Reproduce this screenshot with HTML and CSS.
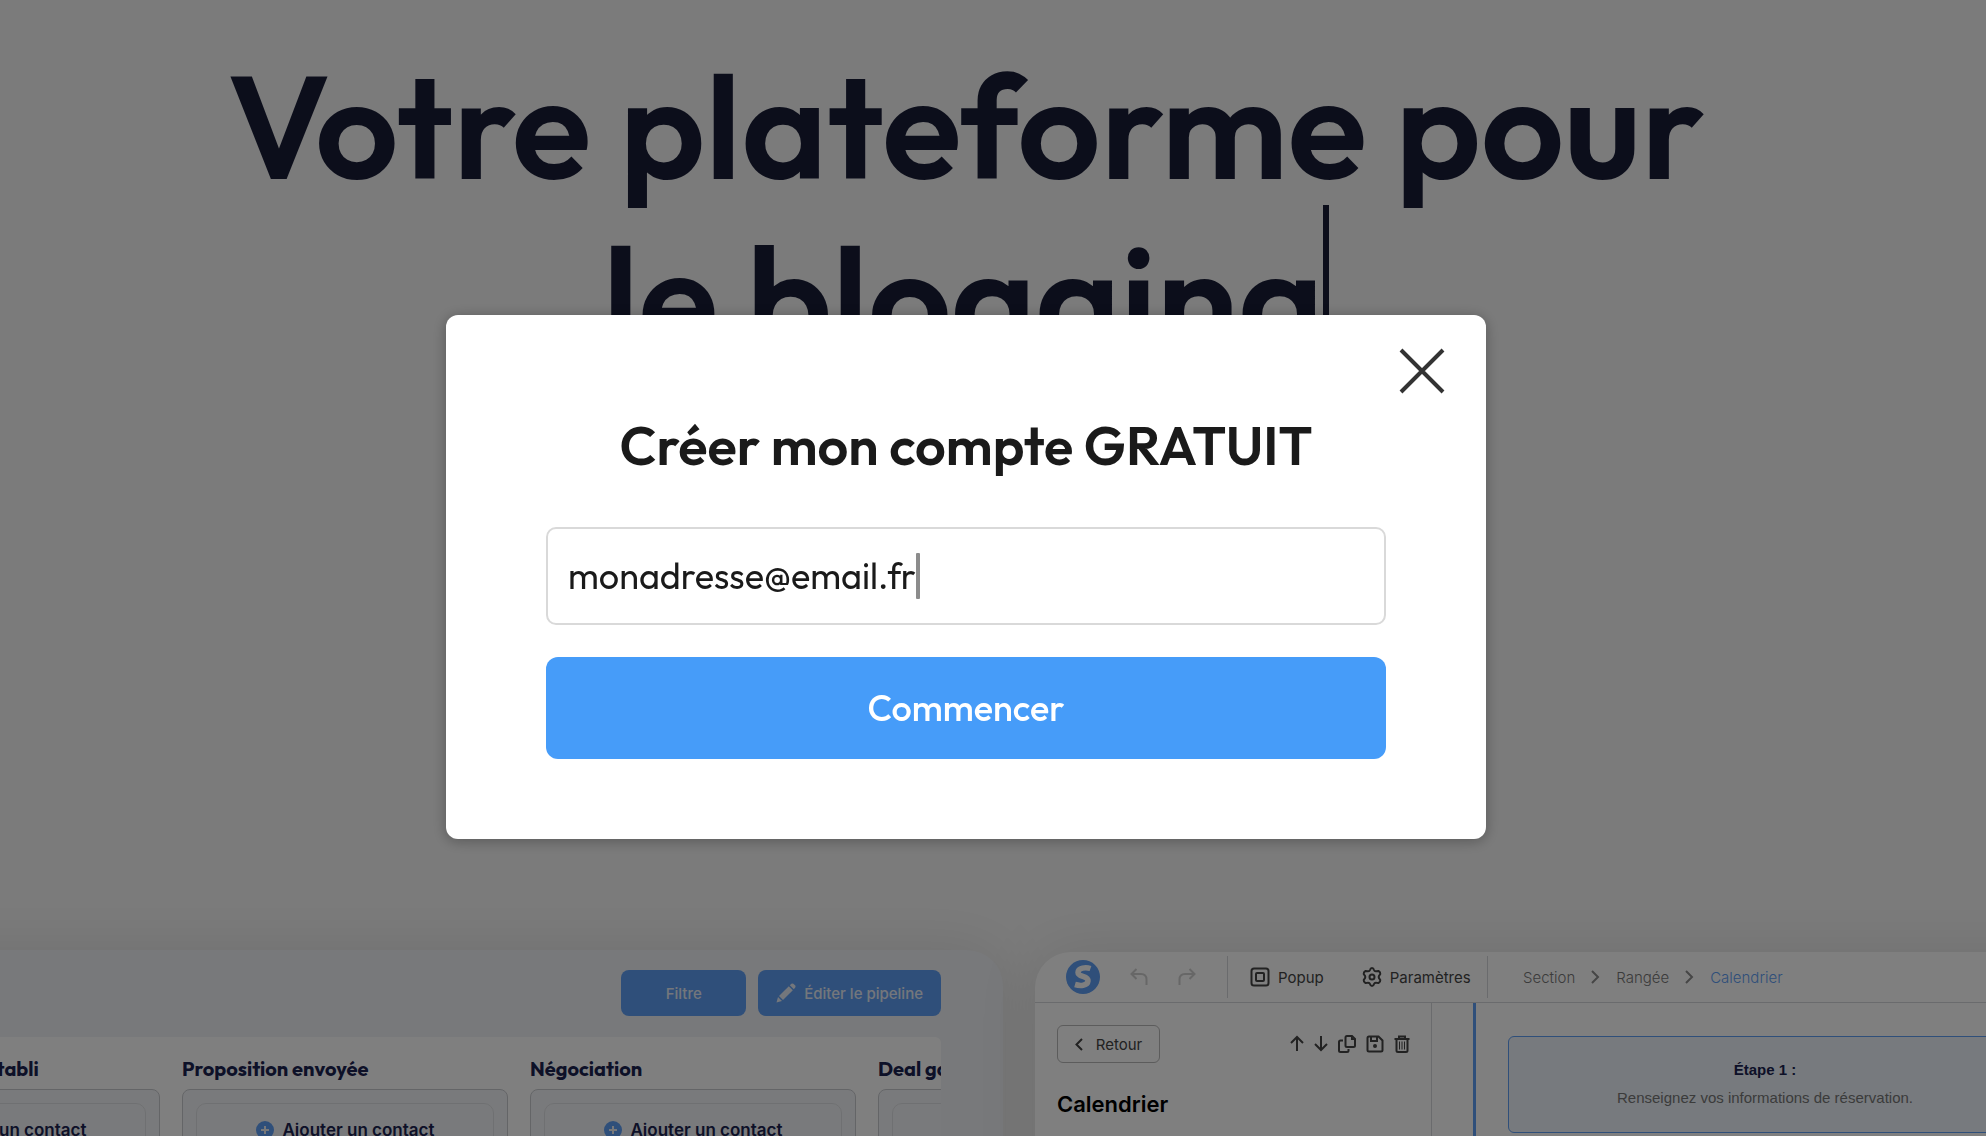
FILE: index.html
```html
<!DOCTYPE html>
<html lang="fr">
<head>
    <meta charset="UTF-8">
    <meta name="viewport" content="width=device-width, initial-scale=1.0">
    <title>Créer mon compte gratuit</title>
    <link rel="stylesheet" href="styles.css">
</head>
<body class="modal-open">
    <main>
        <section class="hero">
            <h1>Votre plateforme pour<br><span class="typed">le blogging</span></h1>
        </section>

        <section class="showcase">
            <!-- CRM pipeline -->
            <div class="card pipeline">
                <div class="pipeline-header">
                    <button class="btn-blue btn-filter" type="button">Filtre</button>
                    <button class="btn-blue" type="button">
                        <svg width="20" height="20" viewBox="0 0 20 20" fill="currentColor"><path d="M0.5 19.5L2 14L6 18Z"/><path d="M3 13L12.8 3.2L16.8 7.2L7 17Z"/><path d="M13.8 2.2L15.4 0.8Q16.4 0 17.4 0.8L19.2 2.6Q20 3.6 19.2 4.6L17.8 6.2Z"/></svg>
                        Éditer le pipeline
                    </button>
                </div>
                <div class="pipeline-board">
                    <div class="column">
                        <h2>Premier contact établi</h2>
                        <div class="column-box">
                            <button class="add-contact" type="button">
                                <svg width="18" height="18" viewBox="0 0 18 18"><circle cx="9" cy="9" r="9" fill="#5e9ef4"/><path d="M9 5v8M5 9h8" stroke="#eef1f5" stroke-width="2"/></svg>
                                Ajouter un contact
                            </button>
                        </div>
                    </div>
                    <div class="column">
                        <h2>Proposition envoyée</h2>
                        <div class="column-box">
                            <button class="add-contact" type="button">
                                <svg width="18" height="18" viewBox="0 0 18 18"><circle cx="9" cy="9" r="9" fill="#5e9ef4"/><path d="M9 5v8M5 9h8" stroke="#eef1f5" stroke-width="2"/></svg>
                                Ajouter un contact
                            </button>
                        </div>
                    </div>
                    <div class="column">
                        <h2>Négociation</h2>
                        <div class="column-box">
                            <button class="add-contact" type="button">
                                <svg width="18" height="18" viewBox="0 0 18 18"><circle cx="9" cy="9" r="9" fill="#5e9ef4"/><path d="M9 5v8M5 9h8" stroke="#eef1f5" stroke-width="2"/></svg>
                                Ajouter un contact
                            </button>
                        </div>
                    </div>
                    <div class="column">
                        <h2>Deal gagné</h2>
                        <div class="column-box">
                            <button class="add-contact" type="button">
                                <svg width="18" height="18" viewBox="0 0 18 18"><circle cx="9" cy="9" r="9" fill="#5e9ef4"/><path d="M9 5v8M5 9h8" stroke="#eef1f5" stroke-width="2"/></svg>
                                Ajouter un contact
                            </button>
                        </div>
                    </div>
                </div>
            </div>

            <!-- Page editor -->
            <div class="card editor">
                <div class="toolbar">
                    <div class="toolbar-history">
                        <svg class="logo" width="34" height="34" viewBox="0 0 34 34"><circle cx="17" cy="17" r="17" fill="#5e9ef4"/><path d="M24.500 8.500C20 7 12 7.500 12 12.500C12 17.500 22.500 15.500 22 21C21.500 26 14 26 9 24.500" fill="none" stroke="#fff" stroke-width="5.500"/></svg>
                        <svg width="18" height="18" viewBox="0 0 18 18" fill="none" stroke="#cfcfcf" stroke-width="2"><path d="M6.500 1L1.500 6L6.500 11M2 6H11Q16.500 6 16.500 11.500V17"/></svg>
                        <svg width="18" height="18" viewBox="0 0 18 18" fill="none" stroke="#cfcfcf" stroke-width="2"><path d="M11.500 1L16.500 6L11.500 11M16 6H7Q1.500 6 1.500 11.500V17"/></svg>
                    </div>
                    <div class="toolbar-actions">
                        <button class="tool" type="button">
                            <svg width="20" height="20" viewBox="0 0 20 20" fill="none" stroke="currentColor" stroke-width="2"><rect x="1.500" y="1.500" width="17" height="17" rx="2.500"/><rect x="6" y="6" width="8" height="8" rx="1"/></svg>
                            Popup
                        </button>
                        <button class="tool" type="button">
                            <svg width="20" height="20" viewBox="0 0 20 20" fill="none" stroke="currentColor" stroke-width="2" stroke-linejoin="round"><path d="M10 1Q11.500 1 12 3Q12.500 4.500 14.500 4.200L16.500 4Q18.500 5 18.300 7L17 8.800Q16.300 10 17 11.200L18.300 13Q18.500 15 16.500 16L14.500 15.800Q12.500 15.500 12 17Q11.500 19 10 19Q8.500 19 8 17Q7.500 15.500 5.500 15.800L3.500 16Q1.500 15 1.700 13L3 11.200Q3.700 10 3 8.800L1.700 7Q1.500 5 3.500 4L5.500 4.200Q7.500 4.500 8 3Q8.500 1 10 1Z"/><circle cx="10" cy="10" r="2.500"/></svg>
                            Paramètres
                        </button>
                    </div>
                    <nav class="breadcrumb">
                        <a href="#">Section</a>
                        <svg width="9" height="14" viewBox="0 0 9 14" fill="none" stroke="#8c8c8c" stroke-width="2"><path d="M1 1L7 7L1 13"/></svg>
                        <a href="#">Rangée</a>
                        <svg width="9" height="14" viewBox="0 0 9 14" fill="none" stroke="#8c8c8c" stroke-width="2"><path d="M1 1L7 7L1 13"/></svg>
                        <a class="current" href="#">Calendrier</a>
                    </nav>
                </div>
                <div class="editor-body">
                    <aside class="sidebar">
                        <div class="sidebar-top">
                            <button class="btn-back" type="button">
                                <svg width="8" height="13" viewBox="0 0 8 13" fill="none" stroke="currentColor" stroke-width="2"><path d="M7 1L1.500 6.500L7 12"/></svg>
                                Retour
                            </button>
                            <div class="sidebar-icons">
                                <svg width="14" height="18" viewBox="0 0 14 18"><path d="M7 16V2M1 8L7 2L13 8"/></svg>
                                <svg width="14" height="18" viewBox="0 0 14 18"><path d="M7 1V15M1 9L7 15L13 9"/></svg>
                                <svg width="18" height="18" viewBox="0 0 18 18"><path d="M9 1H14L17 4V10.500Q17 12 15.500 12H9Q7.500 12 7.500 10.500V2.500Q7.500 1 9 1M5 5.500H2.500Q1 5.500 1 7V15.500Q1 17 2.500 17H9Q10.500 17 10.500 15.500V14"/><path d="M13 1V5H17Z" fill="#444" stroke="none"/></svg>
                                <svg width="18" height="18" viewBox="0 0 18 18"><path d="M3 1.500H12.500L16.500 5.500V15Q16.500 16.500 15 16.500H3Q1.500 16.500 1.500 15V3Q1.500 1.500 3 1.500ZM5 2V6H11V2"/><circle cx="9" cy="11" r="1"/></svg>
                                <svg width="16" height="18" viewBox="0 0 16 18"><path d="M0.500 4H15.500M5 4V1.500H11V4M2.500 4V15.500Q2.500 17 4 17H12Q13.500 17 13.500 15.500V4"/><path stroke-width="1" d="M5.500 6.500V14.500M8 6.500V14.500M10.500 6.500V14.500"/></svg>
                            </div>
                        </div>
                        <h2>Calendrier</h2>
                    </aside>
                    <div class="canvas">
                        <div class="step">
                            <strong>Étape 1 :</strong>
                            <p>Renseignez vos informations de réservation.</p>
                        </div>
                    </div>
                </div>
            </div>
        </section>
    </main>

    <div class="overlay">
        <form class="modal" role="dialog" aria-labelledby="modalTitle">
            <button class="modal-close" type="button" aria-label="Fermer">
                <svg width="46" height="46" viewBox="0 0 46 46" fill="none" stroke="#333" stroke-width="4"><path d="M2 2L44 44M44 2L2 44"/></svg>
            </button>
            <h2 id="modalTitle">Créer mon compte GRATUIT</h2>
            <label class="field">
                <input type="text" aria-label="Adresse email" value="monadresse@email.fr">
                <span class="caret"></span>
            </label>
            <button class="btn-start" type="submit">Commencer</button>
        </form>
    </div>
</body>
</html>
```
FILE: styles.css
```css
* {
    box-sizing: border-box;
}
body {
    font-family: 'Inter', sans-serif;
    background-color: #f7f7f7;
    color: #181c36;
    margin: 0;
}
body.modal-open {
    height: 100vh;
    overflow: hidden;
}
h1, h2, p {
    margin: 0;
}
button {
    font-family: inherit;
    border: none;
    background: none;
    padding: 0;
    cursor: pointer;
}
svg {
    display: block;
    flex-shrink: 0;
}

/* Hero */
.hero {
    padding: 39px 54px 567px 0;
    text-align: center;
}
.hero h1 {
    font-family: 'Outfit', 'Lato', sans-serif;
    font-size: 146px;
    font-weight: 600;
    line-height: 172px;
    white-space: nowrap;
}
.typed {
    border-right: 6px solid #181c36;
}

/* Product cards */
.showcase {
    display: grid;
    grid-template-columns: minmax(0, 1fr) minmax(0, 1fr);
    gap: 32px;
    margin: 0 -260px 0 -208px;
}
.card {
    height: 640px;
    border-radius: 36px;
    overflow: hidden;
    box-shadow: 0 0 60px rgba(0, 0, 0, 0.1);
}
.pipeline {
    background-color: #f0f2f6;
    padding: 20px 62px 0 22px;
}
.pipeline-header {
    display: flex;
    justify-content: flex-end;
    gap: 12px;
    margin-bottom: 21px;
}
.btn-blue {
    height: 46px;
    padding: 0 18px;
    display: flex;
    align-items: center;
    justify-content: center;
    gap: 8px;
    background-color: #5e9ef4;
    color: #e8eef8;
    border-radius: 8px;
    font-size: 15px;
    font-weight: 500;
}
.btn-filter {
    width: 125px;
}
.pipeline-board {
    display: flex;
    gap: 22px;
    height: 500px;
    padding: 18px 20px;
    background-color: #fff;
    border-radius: 6px;
    overflow: hidden;
}
.column {
    flex: 0 0 326px;
}
.column h2 {
    font-family: 'Outfit', 'Lato', sans-serif;
    font-size: 20px;
    font-weight: 700;
    line-height: 28px;
    margin-bottom: 6px;
    color: #1a2350;
}
.column-box {
    height: 400px;
    padding: 13px;
    background-color: #f3f5f8;
    border: 1px solid #c8cacf;
    border-radius: 8px;
}
.add-contact {
    width: 100%;
    height: 54px;
    display: flex;
    align-items: center;
    justify-content: center;
    gap: 9px;
    border: 1px solid #dfe1e5;
    border-radius: 10px;
    color: #1a2350;
    font-size: 17px;
    font-weight: 600;
}

.editor {
    margin-top: 2px;
    background-color: #fff;
}
.toolbar {
    display: flex;
    align-items: center;
    height: 51px;
    border-bottom: 1px solid #d4d6da;
}
.toolbar-history,
.toolbar-actions {
    display: flex;
    align-items: center;
    height: 42px;
    border-right: 1px solid #d4d6da;
}
.toolbar-history {
    gap: 30px;
    width: 193px;
    padding-left: 31px;
}
.toolbar-actions {
    gap: 38px;
    width: 260px;
    padding-left: 22px;
}
.tool {
    display: flex;
    align-items: center;
    gap: 8px;
    color: #444;
    font-size: 15px;
}
.breadcrumb {
    display: flex;
    align-items: center;
    gap: 16px;
    padding-left: 35px;
    font-size: 15px;
    font-weight: 300;
}
.breadcrumb a {
    color: #777;
    text-decoration: none;
}
.breadcrumb a.current {
    color: #5e9ef4;
}
.editor-body {
    display: flex;
    height: 100%;
}
.sidebar {
    flex: 0 0 397px;
    padding: 22px 21px 22px 22px;
    border-right: 1px solid #d4d6da;
}
.sidebar-top {
    display: flex;
    align-items: center;
    justify-content: space-between;
    margin-bottom: 27px;
}
.btn-back {
    display: flex;
    align-items: center;
    justify-content: center;
    gap: 13px;
    width: 103px;
    height: 38px;
    border: 1px solid #b8b8b8;
    border-radius: 6px;
    color: #444;
    font-size: 15px;
}
.sidebar-icons {
    display: flex;
    align-items: center;
    gap: 10px;
}
.sidebar-icons svg {
    fill: none;
    stroke: #444;
    stroke-width: 2;
}
.sidebar h2 {
    color: #000;
    font-size: 22px;
    font-weight: 600;
    line-height: 28px;
}
.canvas {
    flex: 1;
    margin-left: 41px;
    padding: 33px 32px;
    border-left: 3px solid #5e9ef4;
}
.step {
    width: 514px;
    padding: 21px 20px 22px;
    background-color: #eef4fc;
    border: 1px solid #5e9ef4;
    border-radius: 6px;
    font-family: 'Liberation Sans', sans-serif;
    font-size: 15px;
    line-height: 24px;
    text-align: center;
}
.step strong {
    color: #1a2350;
}
.step p {
    margin-top: 4px;
    color: #777;
}

/* Signup modal */
.overlay {
    position: fixed;
    inset: 0;
    display: flex;
    align-items: center;
    justify-content: center;
    padding: 18px 54px 0 0;
    background-color: rgba(0, 0, 0, 0.5);
}
.modal {
    position: relative;
    width: 100%;
    max-width: 1040px;
    padding: 96px 100px 80px;
    background-color: #fff;
    border-radius: 12px;
    box-shadow: 0 2px 14px rgba(0, 0, 0, 0.3);
    font-family: 'Outfit', 'Lato', sans-serif;
    color: #1a1a1a;
}
.modal-close {
    position: absolute;
    top: 33px;
    right: 41px;
}
.modal h2 {
    font-size: 54px;
    font-weight: 600;
    line-height: 68px;
    margin-bottom: 48px;
    text-align: center;
}
.field {
    display: flex;
    align-items: center;
    height: 98px;
    padding: 0 20px;
    margin-bottom: 32px;
    border: 2px solid #d9d9d9;
    border-radius: 10px;
}
.field input {
    field-sizing: content;
    padding: 0 0 2px;
    border: none;
    outline: none;
    background: none;
    color: inherit;
    font-family: inherit;
    font-size: 36px;
}
.caret {
    width: 4px;
    height: 46px;
    background-color: #8c8c8c;
    border-radius: 1px;
}
.btn-start {
    display: block;
    width: 100%;
    height: 102px;
    padding-bottom: 2px;
    background-color: #469cf9;
    border-radius: 12px;
    color: #fff;
    font-size: 36px;
    font-weight: 500;
}
```
